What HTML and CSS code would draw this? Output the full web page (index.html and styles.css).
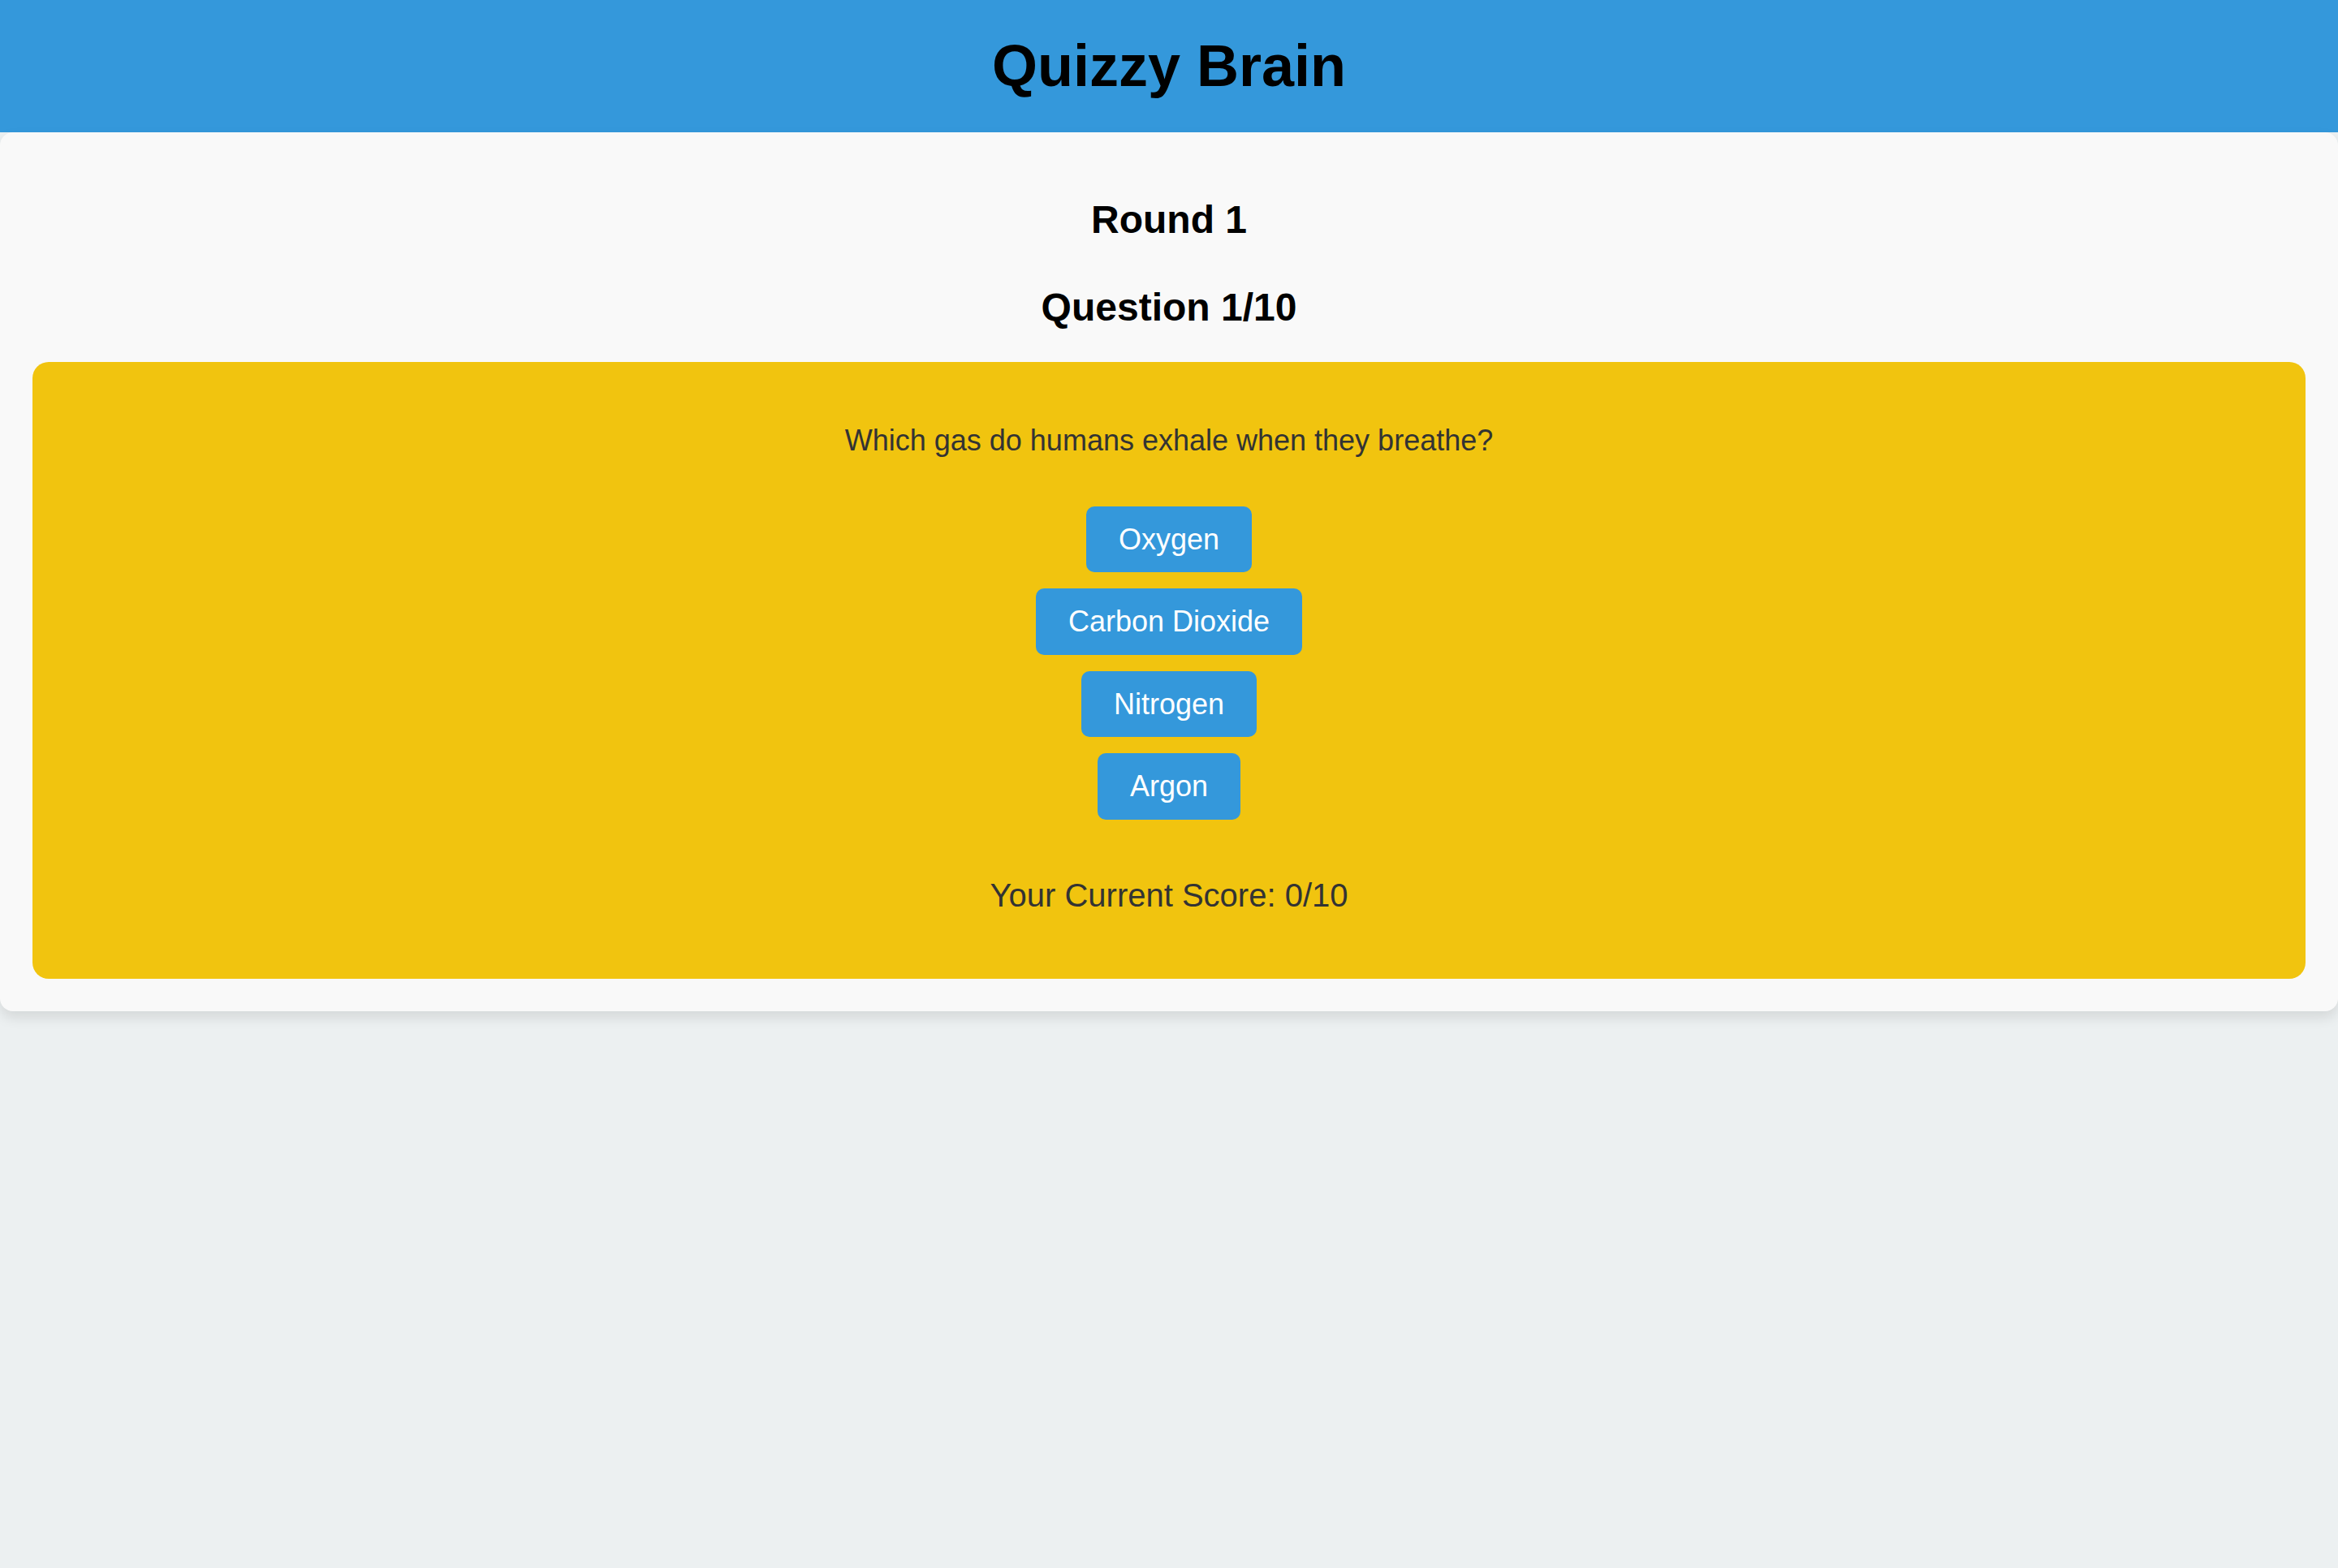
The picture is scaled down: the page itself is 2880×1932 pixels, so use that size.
FILE: index.html
```html
<!DOCTYPE html>
<html lang="en">
<head>
<meta charset="utf-8">
<title>Quizzy Brain</title>
<link rel="stylesheet" href="styles.css">
</head>
<body>
  <header class="site-header">
    <h1 class="site-title">Quizzy Brain</h1>
  </header>
  <main class="quiz-card">
    <h2 class="round-title">Round 1</h2>
    <h2 class="question-count">Question 1/10</h2>
    <section class="question-box">
      <p class="question-text">Which gas do humans exhale when they breathe?</p>
      <div class="answers">
        <button class="answer-btn" type="button">Oxygen</button>
        <button class="answer-btn" type="button">Carbon Dioxide</button>
        <button class="answer-btn" type="button">Nitrogen</button>
        <button class="answer-btn" type="button">Argon</button>
      </div>
      <p class="score">Your Current Score: 0/10</p>
    </section>
  </main>
</body>
</html>
```

FILE: styles.css
```css
* {
  box-sizing: border-box;
}

html,
body {
  margin: 0;
  padding: 0;
}

body {
  background: #ecf0f1;
  font-family: "Liberation Sans", Arial, sans-serif;
  color: #000;
  min-height: 1932px;
}

/* Top bar */
.site-header {
  background: #3498db;
  padding: 40px 0;
  text-align: center;
}

.site-title {
  margin: 0;
  font-size: 72px;
  line-height: 83px;
  font-weight: bold;
  color: #000;
}

/* Main quiz card */
.quiz-card {
  background: #f9f9f9;
  padding: 40px;
  border-radius: 16px;
  box-shadow: 0 8px 16px rgba(0, 0, 0, 0.1);
  text-align: center;
}

.round-title,
.question-count {
  font-size: 48px;
  line-height: 55px;
  font-weight: bold;
  color: #000;
}

.round-title {
  margin: 40px 0 53px;
}

.question-count {
  margin: 0 0 40px;
}

/* Yellow question panel */
.question-box {
  background: #f1c40f;
  border-radius: 20px;
  padding: 40px;
}

.question-text {
  margin: 36px 0 0;
  font-size: 36px;
  line-height: 41px;
  color: #333;
}

.answers {
  display: flex;
  flex-direction: column;
  align-items: center;
  gap: 20px;
  margin-top: 61px;
}

.answer-btn {
  font-family: "Liberation Sans", Arial, sans-serif;
  font-size: 36px;
  line-height: 41.4px;
  padding: 20px 40px;
  border: none;
  border-radius: 10px;
  background: #3498db;
  color: #fff;
  cursor: pointer;
}

.score {
  margin: 70.4px 0 40px;
  font-size: 40px;
  line-height: 46px;
  color: #333;
}
```
